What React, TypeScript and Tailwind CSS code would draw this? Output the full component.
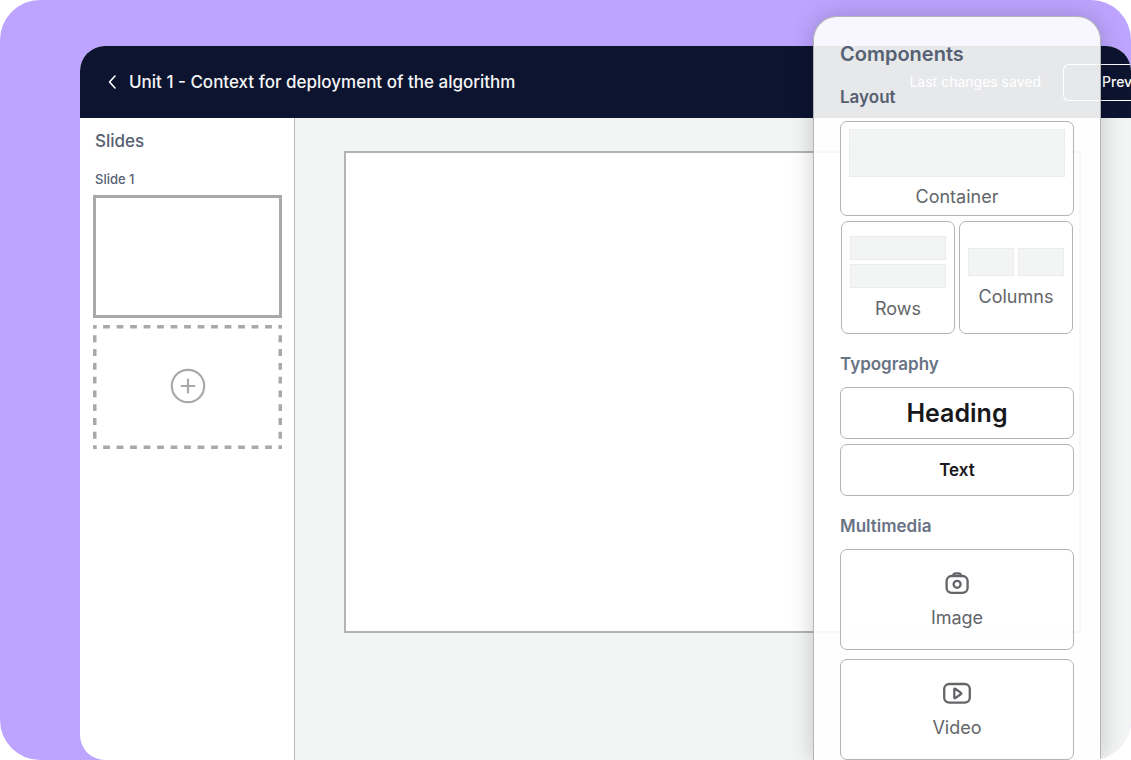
import type { ReactNode } from 'react'
import { clsx } from 'clsx'

interface TileProps {
  children: ReactNode
  className?: string
}

function Tile({ children, className }: TileProps) {
  return (
    <button
      type="button"
      className={clsx('flex w-full flex-col items-center rounded-[7px] border border-[#b4b4b4] bg-white/50 text-lg leading-6 text-[#636569]', className)}
    >
      {children}
    </button>
  )
}

function Block({ className }: { className: string }) {
  return <span className={clsx('block border border-[#ebecec] bg-[#f3f5f4]', className)} />
}

function ChevronIcon() {
  return (
    <svg width="10" height="16" viewBox="0 0 10 16" fill="none" stroke="currentColor" strokeWidth="1.6" strokeLinecap="round" strokeLinejoin="round" aria-hidden="true">
      <path d="M8 2 2.5 8 8 14" />
    </svg>
  )
}

function PlusCircleIcon() {
  return (
    <svg width="36" height="36" viewBox="0 0 36 36" fill="none" stroke="currentColor" strokeWidth="2.2" strokeLinecap="round" aria-hidden="true">
      <circle cx="18" cy="18" r="16.2" />
      <path d="M18 11.5v13M11.5 18h13" />
    </svg>
  )
}

// Wide dashes that meet at the corners; pathLength counts the dashes per side
function DashedOutline() {
  return (
    <svg className="absolute inset-0 h-full w-full" stroke="currentColor" strokeWidth="7" strokeDasharray="0.5 0.5" strokeDashoffset="0.25" aria-hidden="true">
      <line x1="0" y1="0" x2="100%" y2="0" pathLength="14" />
      <line x1="0" y1="100%" x2="100%" y2="100%" pathLength="14" />
      <line x1="0" y1="0" x2="0" y2="100%" pathLength="9" />
      <line x1="100%" y1="0" x2="100%" y2="100%" pathLength="9" />
    </svg>
  )
}

function CameraIcon() {
  return (
    <svg width="28" height="24" viewBox="0 0 28 24" fill="none" stroke="currentColor" strokeWidth="2.3" strokeLinejoin="round" aria-hidden="true">
      <rect x="3.6" y="5" width="21" height="16.8" rx="5" />
      <path d="M10 5c.3-1.900 1.200-2.700 2.600-2.700h3c1.400 0 2.300.8 2.600 2.700" />
      <circle cx="14.100" cy="13.300" r="3.500" />
    </svg>
  )
}

function VideoIcon() {
  return (
    <svg width="28" height="24" viewBox="0 0 28 24" fill="none" stroke="currentColor" strokeWidth="2.3" strokeLinejoin="round" aria-hidden="true">
      <rect x="1.200" y="3" width="25.600" height="18.600" rx="5" />
      <path d="M11.300 8.200v8.400c0 .6.500.8 1 .5l5.700-4.100c.4-.3.400-.8 0-1.100l-5.700-4.100c-.5-.4-1-.2-1 .4Z" />
    </svg>
  )
}

const MEDIA = [
  { label: 'Image', Icon: CameraIcon },
  { label: 'Video', Icon: VideoIcon },
]

function ComponentsPanel() {
  return (
    <aside className="absolute top-4 right-[30px] bottom-0 w-72 overflow-hidden rounded-t-[24px] border border-b-0 border-[#b4b4b4] bg-white/90 px-[26px] pt-[25px] shadow-[0_0_24px_rgba(0,0,0,0.2)]">
      <h2 className="text-xl leading-6 font-semibold text-[#556072]">Components</h2>

      <section className="mt-[19px]">
        <h3 className="text-[17px] leading-6 font-semibold text-[#556072]">Layout</h3>
        <div className="mt-3 flex flex-col gap-[5px]">
          <Tile className="h-[95px] px-2 pt-[7px]">
            <Block className="h-12 w-full" />
            <span className="mt-2">Container</span>
          </Tile>
          <div className="grid grid-cols-2 gap-1 px-px">
            <Tile className="h-[113px] gap-1 px-2 pt-3.5">
              <Block className="h-6 w-full" />
              <Block className="h-6 w-full" />
              <span className="mt-[5px]">Rows</span>
            </Tile>
            <Tile className="h-[113px] px-2 pt-[26px]">
              <span className="flex w-full gap-1">
                <Block className="h-7 flex-1" />
                <Block className="h-7 flex-1" />
              </span>
              <span className="mt-[9px]">Columns</span>
            </Tile>
          </div>
        </div>
      </section>

      <section className="mt-[18px]">
        <h3 className="text-[17px] leading-6 font-semibold text-[#687385]">Typography</h3>
        <div className="mt-[11px] flex flex-col gap-[5px]">
          <Tile className="h-[52px] justify-center">
            <span className="text-[25px] leading-8 font-semibold text-[#18181b]">Heading</span>
          </Tile>
          <Tile className="h-[52px] justify-center">
            <span className="text-[17px] font-semibold text-[#18181b]">Text</span>
          </Tile>
        </div>
      </section>

      <section className="mt-[18px]">
        <h3 className="text-[17px] leading-6 font-semibold text-[#687385]">Multimedia</h3>
        <div className="mt-[11px] flex flex-col gap-[9px]">
          {MEDIA.map(({ label, Icon }) => (
            <Tile key={label} className="h-[101px] gap-[11px] pt-[21px]">
              <Icon />
              <span>{label}</span>
            </Tile>
          ))}
        </div>
      </section>
    </aside>
  )
}

export default function App() {
  return (
    <div className="bg-white font-['Inter',sans-serif]">
      <div className="relative flex h-screen overflow-hidden rounded-[40px] bg-[#bda5ff] pt-[46px] pl-20">
        <div className="flex min-w-0 flex-1 flex-col overflow-hidden rounded-[25px] bg-white">
          <header className="flex h-[72px] shrink-0 items-center bg-[#0d1430] pl-[27px] text-white">
            <a href="#units" aria-label="Back to units">
              <ChevronIcon />
            </a>
            <h1 className="ml-3 text-[17px] leading-6 font-medium whitespace-nowrap text-[#f5f6f6]">
              Unit 1 - Context for deployment of the algorithm
            </h1>
            <span className="ml-auto text-sm whitespace-nowrap">Last changes saved</span>
            <button
              type="button"
              aria-label="Preview"
              className="ml-[22px] h-[37px] w-[68px] shrink-0 overflow-hidden rounded-l-md border border-r-0 border-white pl-[38px] text-left text-sm font-medium whitespace-nowrap"
            >
              Prev
            </button>
          </header>

          <div className="flex min-h-0 flex-1">
            <nav aria-label="Slides" className="w-[215px] shrink-0 border-r border-[#b8b8b8] pt-[11px] pr-3 pl-[13px]">
              <h2 className="px-0.5 text-[17px] leading-6 font-medium text-[#556072]">Slides</h2>
              <h3 className="mt-4 px-0.5 text-[13px] leading-5 font-medium text-[#556072]">Slide 1</h3>
              <div className="mt-1.5 flex flex-col gap-[7px]">
                <button type="button" aria-label="Slide 1" className="h-[123px] border-3 border-[#a9a9a9] bg-white" />
                <button type="button" aria-label="Add slide" className="relative flex h-[124px] items-center justify-center pb-0.5 text-[#a9a9a9]">
                  <DashedOutline />
                  <PlusCircleIcon />
                </button>
              </div>
            </nav>

            <main className="min-w-0 flex-1 bg-[#f3f5f4] pt-[33px] pr-[50px] pl-[49px]">
              <div className="aspect-[737/482] border-2 border-[#b4b4b4] bg-white" />
            </main>
          </div>
        </div>

        <ComponentsPanel />
      </div>
    </div>
  )
}
